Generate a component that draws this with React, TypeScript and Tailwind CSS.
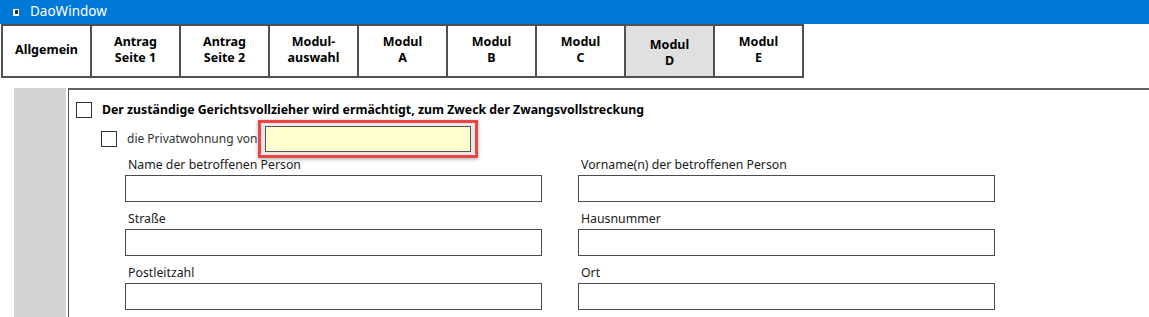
import React from "react";

const tabs = [
  ["Allgemein"],
  ["Antrag", "Seite 1"],
  ["Antrag", "Seite 2"],
  ["Modul-", "auswahl"],
  ["Modul", "A"],
  ["Modul", "B"],
  ["Modul", "C"],
  ["Modul", "D"],
  ["Modul", "E"],
];

const rows = [
  ["Name der betroffenen Person", "Vorname(n) der betroffenen Person"],
  ["Straße", "Hausnummer"],
  ["Postleitzahl", "Ort"],
];

function Field({ label }: { label: string }) {
  return (
    <div className="flex flex-col w-[417px]">
      <div className="h-[20px] pl-[3px] text-[12.3px] leading-[20px] text-[#1a1a1a]">{label}</div>
      <div className="h-[27px] border border-[#4a4a4a] bg-white" />
    </div>
  );
}

export default function App() {
  return (
    <div
      className="w-[1149px] h-[317px] overflow-hidden bg-white text-black"
      style={{ fontFamily: '"Noto Sans", "Open Sans", sans-serif' }}
    >
      {/* Titelleiste */}
      <div className="h-[24px] bg-[#0078d7] flex items-center">
        <div className="ml-[13px] w-[6px] h-[7px] bg-white flex items-center justify-center">
          <div className="w-[3px] h-[4px] bg-[#333]" />
        </div>
        <span className="ml-[11px] text-white text-[13.5px] leading-none">DaoWindow</span>
      </div>

      {/* Reiter */}
      <div className="flex pl-[1px]">
        {tabs.map((t, i) => {
          const active = i === 7;
          return (
            <div
              key={i}
              className={`w-[91px] h-[54px] border-2 border-[#505050] -ml-[2px] first:ml-0 flex flex-col items-center justify-center text-[12.5px] font-bold leading-[16px] ${
                active ? "bg-[#e0e0e0] pt-[4px]" : "bg-white pb-[2px]"
              }`}
            >
              {t.map((line) => (
                <span key={line}>{line}</span>
              ))}
            </div>
          );
        })}
      </div>

      {/* Inhalt */}
      <div className="flex mt-[10px] h-[229px]">
        <div className="ml-[14px] w-[52px] bg-[#d3d3d3]" />
        <div className="ml-[2px] w-[1px] bg-[#555]" />
        <div className="flex-1 border-t-2 border-[#606060]">
          <div className="flex items-center ml-[7px] mt-[12px] h-[16px]">
            <div className="w-[16px] h-[16px] border border-[#333] bg-white" />
            <span className="ml-[10px] text-[12.3px] font-bold">
              Der zuständige Gerichtsvollzieher wird ermächtigt, zum Zweck der Zwangsvollstreckung
            </span>
          </div>

          <div className="flex items-center ml-[32px] mt-[2px] h-[38px]">
            <div className="w-[16px] h-[16px] border border-[#333] bg-white" />
            <span className="ml-[10px] text-[12px] text-[#333]">die Privatwohnung von</span>
            <div className="ml-[1px] border-[3px] border-[#ef4444] px-[4px] py-[3px] shadow-[0_1px_4px_rgba(0,0,0,0.35)] bg-[#e8e8e8]">
              <div className="w-[206px] h-[26px] bg-[#ffffd0] border border-[#555]" />
            </div>
          </div>

          <div className="flex flex-col gap-[7px] ml-[56px] -mt-[3px]">
            {rows.map(([a, b]) => (
              <div key={a} className="flex gap-[36px]">
                <Field label={a} />
                <Field label={b} />
              </div>
            ))}
          </div>
        </div>
      </div>
    </div>
  );
}
